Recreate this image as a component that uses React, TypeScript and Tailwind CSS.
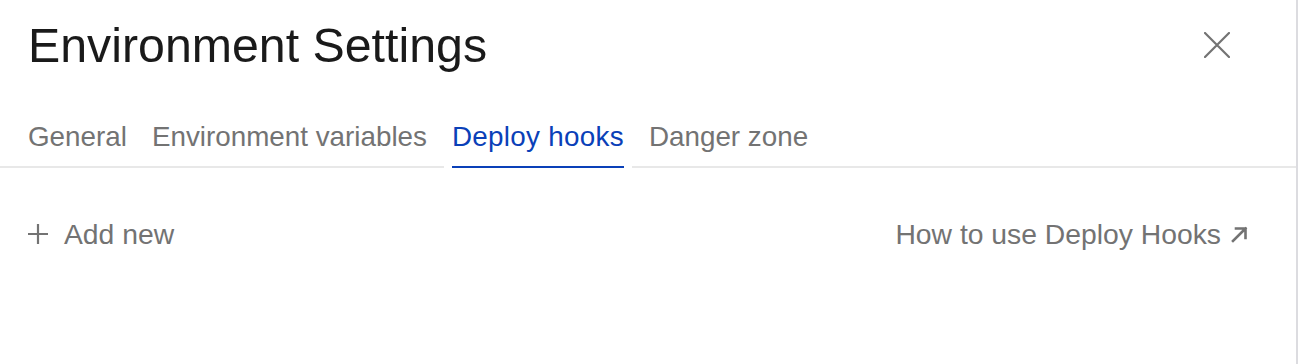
import React from "react";

const tabs = ["General", "Environment variables", "Deploy hooks", "Danger zone"];

export default function App() {
  return (
    <div
      className="w-full h-[364px] bg-white border-r-2 border-[#dcdce0] overflow-hidden"
      style={{ fontFamily: '"Liberation Sans", Arial, sans-serif' }}
    >
      <div className="flex items-center justify-between pt-[21px] pl-[28px] pr-[66px]">
        <h1 className="text-[48.3px] leading-[48px] text-[#1a1a1a] font-normal">
          Environment Settings
        </h1>
        <button className="w-[26px] h-[26px] flex items-center justify-center text-[#737373]">
          <svg width="26" height="26" viewBox="0 0 26 26" fill="none" stroke="currentColor" strokeWidth="2.2" strokeLinecap="round">
            <path d="M1 1L25 25M25 1L1 25" />
          </svg>
        </button>
      </div>

      <div className="mt-[53px] flex gap-[25px] pl-[28px] border-b-2 border-[#e8e8e8]">
        {tabs.map((t) => {
          const active = t === "Deploy hooks";
          return (
            <div
              key={t}
              className={
                "relative pb-[15px] pt-[1px] text-[27.8px] leading-[28px] " +
                (active ? "text-[#0a40b8] tracking-[0.3px]" : "text-[#737373]")
              }
            >
              {t}
              {active && (
                <div className="absolute left-[-8px] right-[-8px] bottom-[-2px] h-[2px] bg-white px-[8px]">
                  <div className="h-full bg-[#0a40b8]" />
                </div>
              )}
            </div>
          );
        })}
      </div>

      <div className="mt-[52px] flex items-center justify-between pl-[28px] pr-[48px] text-[28.3px] leading-[28px] text-[#737373]">
        <div className="flex items-center gap-[16px]">
          <svg width="20" height="20" viewBox="0 0 20 20" fill="none" stroke="currentColor" strokeWidth="2.2">
            <path d="M10 0V20M0 10H20" />
          </svg>
          <span>Add new</span>
        </div>
        <div className="flex items-center gap-[10px]">
          <span>How to use Deploy Hooks</span>
          <svg width="17" height="17" viewBox="0 0 17 17" fill="none" stroke="currentColor" strokeWidth="2.6" strokeLinecap="square">
            <path d="M2 15L14.5 2.5M5 2.5H14.5V12" />
          </svg>
        </div>
      </div>
    </div>
  );
}
